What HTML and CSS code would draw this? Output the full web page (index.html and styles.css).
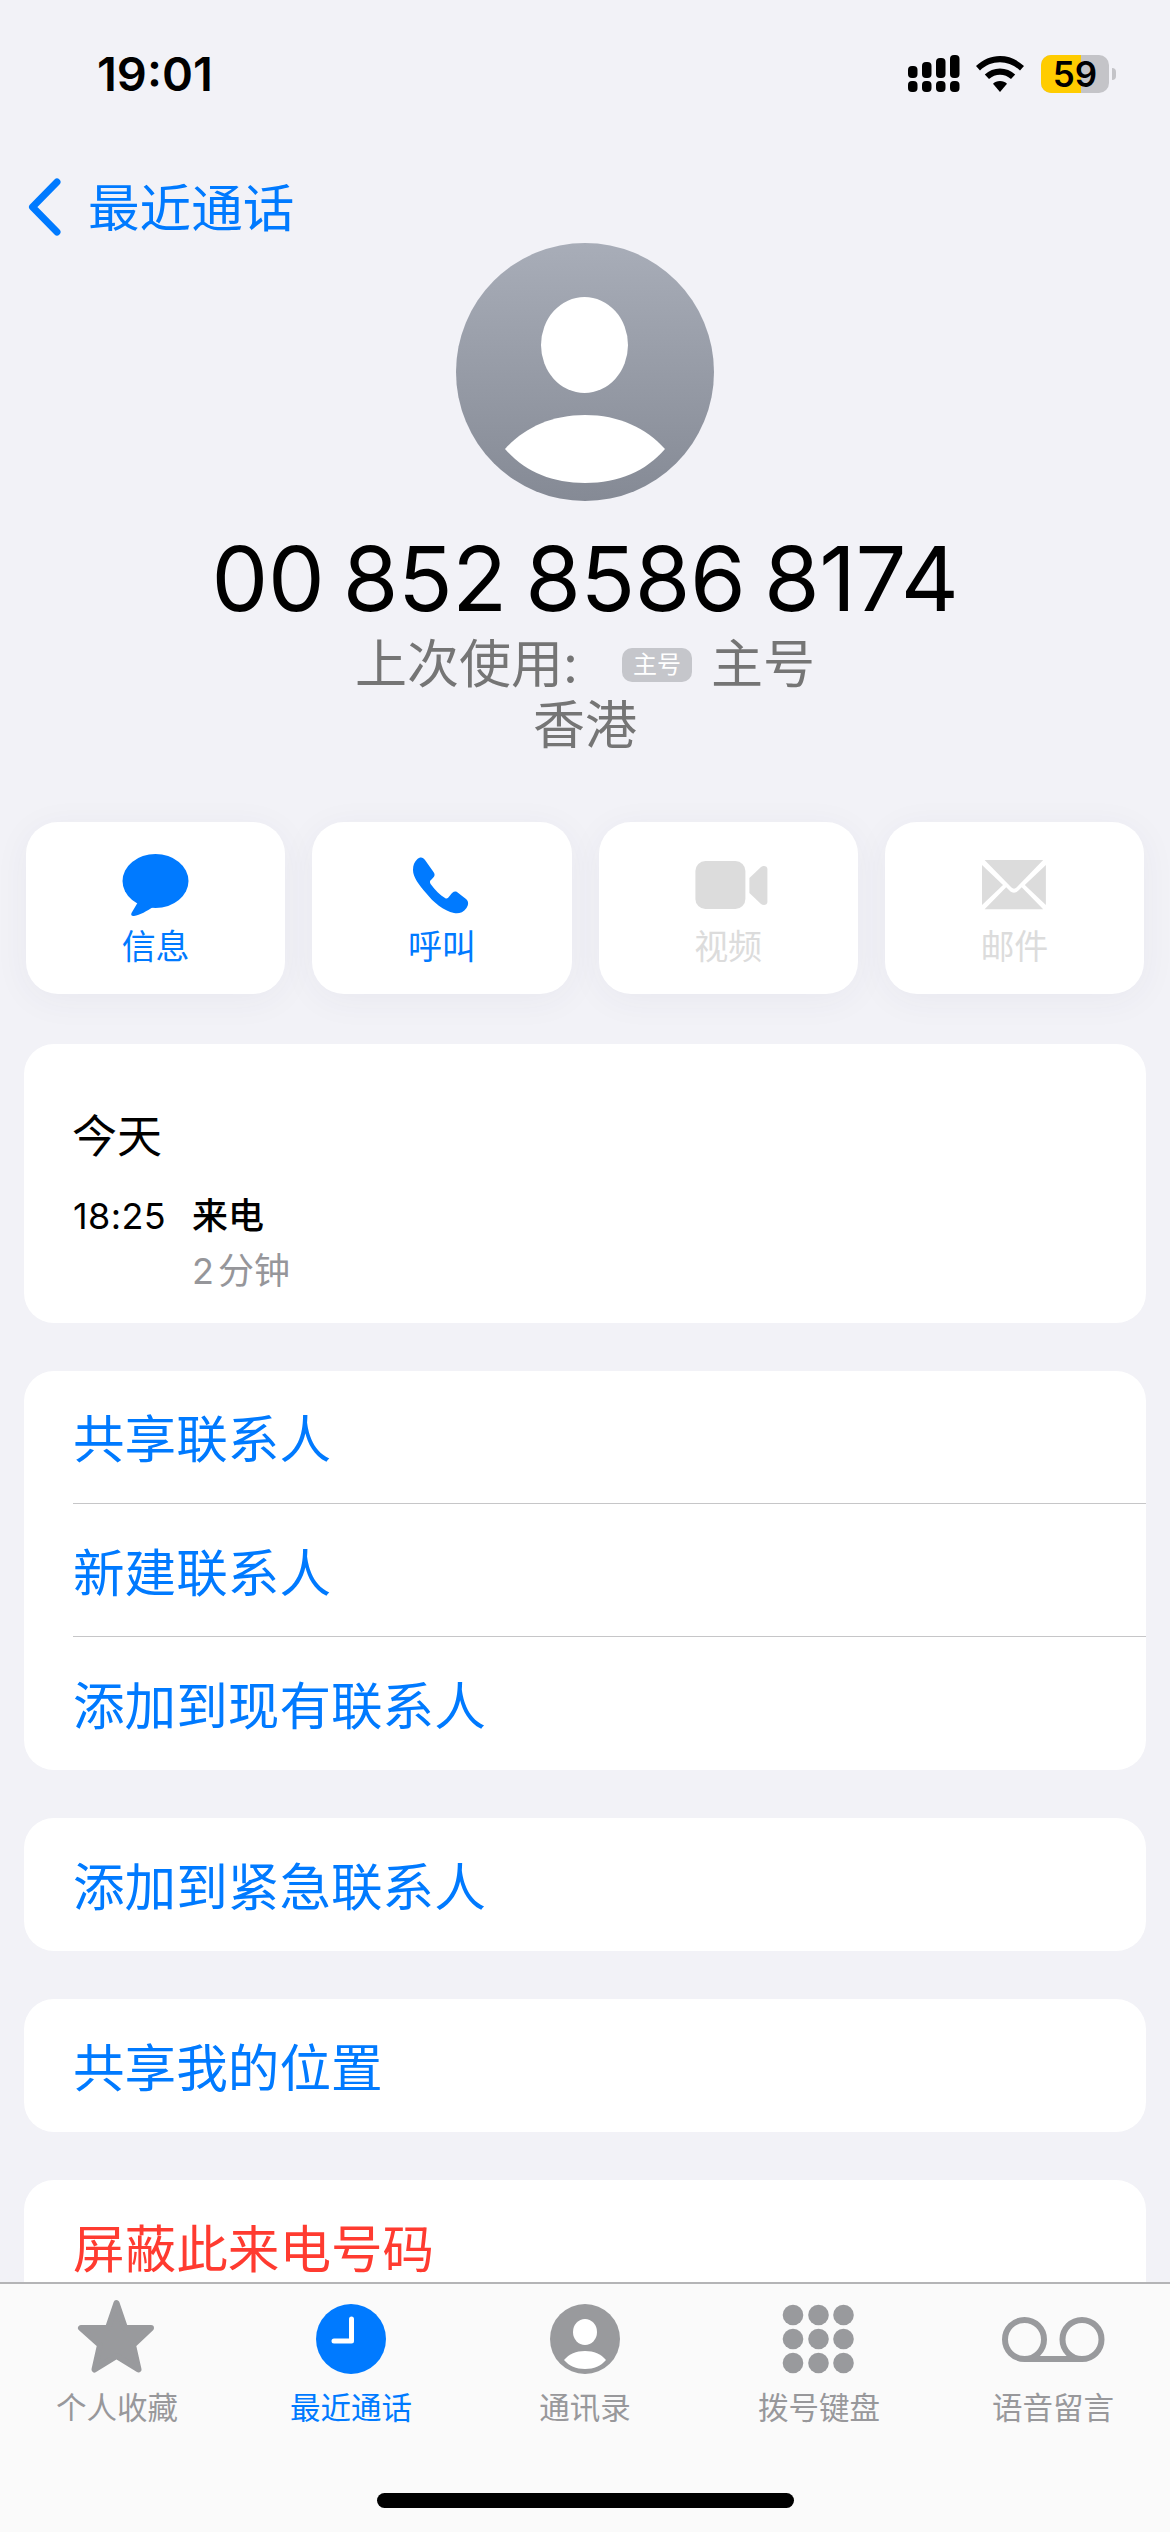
FILE: index.html
```html
<!DOCTYPE html>
<html lang="zh-CN">
<head>
<meta charset="utf-8">
<title>最近通话</title>
<link rel="stylesheet" href="styles.css">
</head>
<body>
<div class="screen">
  <header class="status">
    <span class="clock">19:01</span>
    <div class="indicators">
      <svg class="signal" width="52" height="38" viewBox="0 0 52 38">
        <g fill="#000">
          <rect x="0" y="11" width="9.5" height="12" rx="4"/><rect x="14" y="7" width="9.5" height="16" rx="4"/><rect x="28" y="3" width="9.5" height="20" rx="4"/><rect x="42" y="0" width="9.5" height="23" rx="4"/>
          <rect x="0" y="26" width="9.5" height="11" rx="4"/><rect x="14" y="26" width="9.5" height="11" rx="4"/><rect x="28" y="26" width="9.5" height="11" rx="4"/><rect x="42" y="26" width="9.5" height="11" rx="4"/>
        </g>
      </svg>
      <svg class="wifi" width="48" height="36" viewBox="0 0 48 36">
        <path d="M24 0C33 0 41 3.500 48 10L44 14.500C38.500 9.200 31.500 6.300 24 6.300C16.500 6.300 9.500 9.200 4 14.500L0 10C7 3.500 15 0 24 0Z" fill="#000"/>
        <path d="M24 12.500C29.800 12.500 35 14.700 39.200 18.500L35 23C31.800 20.200 28 18.700 24 18.700C20 18.700 16.200 20.200 13 23L8.800 18.500C13 14.700 18.200 12.500 24 12.500Z" fill="#000"/>
        <path d="M24 25C26.800 25 29.300 26 31 27.700L24 36L17 27.700C18.700 26 21.200 25 24 25Z" fill="#000"/>
      </svg>
      <div class="battery">
        <div class="battery-body"><span class="battery-fill"></span><span class="battery-text">59</span></div>
        <span class="battery-cap"></span>
      </div>
    </div>
  </header>

  <nav class="nav">
    <svg class="chevron" width="40" height="64" viewBox="0 0 40 64"><path d="M33 7L8.500 32L33 57" fill="none" stroke="#007aff" stroke-width="7" stroke-linecap="round" stroke-linejoin="round"/></svg>
    <span class="nav-title">最近通话</span>
  </nav>

  <section class="hero">
    <svg class="avatar" width="258" height="258" viewBox="0 0 258 258">
      <defs><linearGradient id="avatarFill" x1="0" y1="0" x2="0" y2="1"><stop offset="0" stop-color="#a8adb8"/><stop offset="1" stop-color="#858a95"/></linearGradient></defs>
      <circle cx="129" cy="129" r="129" fill="url(#avatarFill)"/>
      <ellipse cx="128.500" cy="102" rx="43.500" ry="48" fill="#fff"/>
      <path d="M49 206C68 185 95 172 129 172C163 172 190 185 209 206C190 228 163 240 129 240C95 240 68 228 49 206Z" fill="#fff"/>
    </svg>
    <h1 class="number">00 852 8586 8174</h1>
    <p class="meta">上次使用:<span class="badge">主号</span>主号</p>
    <p class="meta">香港</p>
  </section>

  <section class="actions">
    <div class="action">
      <svg width="80" height="72" viewBox="0 0 80 72"><ellipse cx="39.500" cy="33" rx="33" ry="27" fill="#007aff"/><path d="M22 54L15.500 65C14.500 67 16 68.500 18 68C24 67 31 63 37 59Z" fill="#007aff"/></svg>
      <span class="action-label">信息</span>
    </div>
    <div class="action">
      <svg width="80" height="72" viewBox="0 0 80 72"><path d="M15 11.500C18 8.500 21 9 23 12L31.500 24C33.500 27 32.500 28.500 30 31C27.500 33 27.500 34 29 36.500C33 42 38 47 43 50C45 51.500 46 50 48 47.500C50 45 52 42.500 55 44L64 51C67 53.500 66.500 57 64.500 60C61 65 56 66 52 65C42 63 31 54 24 45C17 37 11 29 11 22C11 17 12.500 14 15 11.500Z" fill="#007aff"/></svg>
      <span class="action-label">呼叫</span>
    </div>
    <div class="action is-off">
      <svg width="80" height="72" viewBox="0 0 80 72"><rect x="7.400" y="13" width="50" height="48" rx="10" fill="#dcdcdc"/><path d="M61.400 30L73 19C75.500 17 79.400 18 79.400 21V54C79.400 57 75.500 58 73 56L61.400 45Z" fill="#dcdcdc"/></svg>
      <span class="action-label">视频</span>
    </div>
    <div class="action is-off">
      <svg width="80" height="72" viewBox="0 0 80 72"><g fill="#dcdcdc"><path d="M10.600 12H69.200L42.500 39.500C41 41 39 41 37.500 39.500Z"/><path d="M8 17L29 37L8 57Z"/><path d="M71.900 17V57L50.800 37Z"/><path d="M10.600 61.300L32.200 39.300L35 42C38 45.500 42 45.500 45 42L47.700 39.300L69.200 61.300Z"/></g></svg>
      <span class="action-label">邮件</span>
    </div>
  </section>

  <section class="card history">
    <div class="history-day">今天</div>
    <div class="history-grid">
      <span class="history-time">18:25</span>
      <span class="history-kind">来电</span>
      <span class="history-length">2 分钟</span>
    </div>
  </section>

  <section class="card list">
    <div class="row">共享联系人</div>
    <div class="row">新建联系人</div>
    <div class="row">添加到现有联系人</div>
  </section>
  <section class="card single"><div class="row">添加到紧急联系人</div></section>
  <section class="card single"><div class="row">共享我的位置</div></section>
  <section class="card single"><div class="row is-danger">屏蔽此来电号码</div></section>

  <footer class="tabbar">
    <div class="tab">
      <svg width="110" height="80" viewBox="-5 0 110 80"><path d="M49.500 5L58 30H84L66 47L71.500 71.500L49.500 58L27.500 71.500L33 47L14 30H41Z" fill="#999a9d" stroke="#999a9d" stroke-width="6" stroke-linejoin="round"/></svg>
      <span class="tab-label">个人收藏</span>
    </div>
    <div class="tab is-active">
      <svg width="110" height="80" viewBox="-5 0 110 80"><circle cx="50" cy="41" r="35" fill="#007aff"/><path d="M50.500 21V43H33" fill="none" stroke="#fff" stroke-width="5" stroke-linecap="round" stroke-linejoin="round"/></svg>
      <span class="tab-label">最近通话</span>
    </div>
    <div class="tab">
      <svg width="110" height="80" viewBox="-5 0 110 80"><circle cx="50" cy="41" r="35" fill="#999a9d"/><ellipse cx="50" cy="34" rx="12" ry="13" fill="#fff"/><path d="M29 62C34 56 41 53 50 53C59 53 66 56 71 62C66 68 59 71 50 71C41 71 34 68 29 62Z" fill="#fff"/></svg>
      <span class="tab-label">通讯录</span>
    </div>
    <div class="tab">
      <svg width="110" height="80" viewBox="-5 0 110 80"><g fill="#999a9d"><circle cx="24" cy="17" r="10.300"/><circle cx="49.500" cy="17" r="10.300"/><circle cx="74.500" cy="17" r="10.300"/><circle cx="24" cy="41" r="10.300"/><circle cx="49.500" cy="41" r="10.300"/><circle cx="74.500" cy="41" r="10.300"/><circle cx="24" cy="65" r="10.300"/><circle cx="49.500" cy="65" r="10.300"/><circle cx="74.500" cy="65" r="10.300"/></g></svg>
      <span class="tab-label">拨号键盘</span>
    </div>
    <div class="tab">
      <svg width="110" height="80" viewBox="-5 0 110 80"><g fill="none" stroke="#999a9d" stroke-width="6"><circle cx="21.500" cy="41.500" r="19.500"/><circle cx="79" cy="41.500" r="19.500"/><path d="M21.500 61H79"/></g></svg>
      <span class="tab-label">语音留言</span>
    </div>
    <span class="home-indicator"></span>
  </footer>
</div>
</body>
</html>
```
FILE: styles.css
```css
* { box-sizing: border-box; }
html, body { margin: 0; padding: 0; }
body {
  background: #f2f2f7;
  font-family: Inter, "Noto Sans CJK SC", sans-serif;
  color: #000;
}
h1, p { margin: 0; font-weight: 400; }
.screen {
  position: relative;
  width: 1170px;
  height: 2532px;
  overflow: hidden;
  background: #f2f2f7;
}

/* status bar */
.status {
  height: 148px;
  display: flex;
  justify-content: space-between;
  align-items: center;
  padding: 0 54px 0 97px;
}
.clock { font-size: 47px; font-weight: 600; line-height: 56px; }
.indicators { display: flex; align-items: center; }
.signal { margin-right: 16px; }
.wifi { margin-right: 17px; }
.battery { display: flex; align-items: center; gap: 3px; }
.battery-body {
  position: relative;
  width: 68px;
  height: 38px;
  border-radius: 10px;
  background: #c4c4c8;
  display: flex;
  align-items: center;
  justify-content: center;
}
.battery-fill {
  position: absolute;
  left: 0;
  top: 0;
  bottom: 0;
  width: 40px;
  background: #ffcc00;
  border-radius: 10px 0 0 10px;
}
.battery-text { position: relative; font-size: 35px; font-weight: 600; line-height: 38px; }
.battery-cap { width: 4px; height: 12px; background: #c4c4c8; border-radius: 0 6px 6px 0; }

/* nav */
.nav {
  height: 72px;
  margin-top: 23px;
  padding-left: 24px;
  display: flex;
  align-items: center;
}
.chevron { margin-right: 24px; }
.nav-title { font-size: 51.6px; color: #007aff; line-height: 66px; padding-top: 2px; }

/* hero */
.hero { display: flex; flex-direction: column; align-items: center; }
.avatar { display: block; }
.number {
  margin-top: 33px;
  margin-bottom: 10px;
  font-size: 90px;
  line-height: 90px;
  letter-spacing: -0.4px;
  word-spacing: -6.5px;
}
.meta {
  font-size: 52px;
  line-height: 61px;
  color: #757575;
  display: flex;
  align-items: center;
}
.badge {
  width: 70px;
  height: 34px;
  margin: 0 19px 0 44px;
  border-radius: 10px;
  background: #c5c6cb;
  color: #fff;
  font-size: 24px;
  line-height: 34px;
  text-align: center;
}

/* actions */
.actions {
  display: grid;
  grid-template-columns: repeat(4, 1fr);
  gap: 27px;
  padding: 0 26px;
  margin-top: 66px;
}
.action {
  height: 172px;
  padding-top: 26px;
  background: #fff;
  border-radius: 32px;
  box-shadow: 0 6px 36px rgba(60, 60, 90, 0.05);
  display: flex;
  flex-direction: column;
  align-items: center;
  color: #007aff;
}
.action svg { display: block; }
.action-label { margin-top: 5px; font-size: 34px; line-height: 44px; }
.is-off { color: #dcdcdc; }

/* cards */
.card {
  margin: 48px 24px 0;
  background: #fff;
  border-radius: 30px;
  overflow: hidden;
}
.history { height: 279px; margin-top: 50px; padding: 65px 0 0 48px; }
.history-day { font-size: 45px; line-height: 56px; }
.history-grid {
  display: grid;
  grid-template-columns: 119px 1fr;
  row-gap: 10px;
  margin-top: 29px;
  padding-left: 1px;
}
.history-time { font-size: 36px; line-height: 44px; letter-spacing: 0.4px; }
.history-kind { font-size: 36px; line-height: 44px; font-weight: 500; }
.history-length { grid-column: 2; font-size: 36px; line-height: 46px; color: #96969a; word-spacing: -6px; }

.row {
  height: 133px;
  margin-left: 49px;
  padding-top: 5px;
  font-size: 51.6px;
  line-height: 64px;
  color: #007aff;
  display: flex;
  align-items: center;
}
.list { padding-bottom: 1px; }
.list .row:first-child { height: 132px; padding-top: 3px; }
.list .row + .row { border-top: 1px solid #c6c6c8; }
.is-danger { color: #ff3b30; }

/* tab bar */
.tabbar {
  position: absolute;
  left: 0;
  right: 0;
  bottom: 0;
  height: 250px;
  padding-top: 14px;
  background: #fafafa;
  border-top: 2px solid #b4b4b6;
  display: grid;
  grid-template-columns: repeat(5, 1fr);
  align-items: start;
}
.tab { display: flex; flex-direction: column; align-items: center; color: #98989b; }
.tab svg { display: block; }
.tab-label { margin-top: 12px; font-size: 30.5px; line-height: 36px; }
.is-active { color: #007aff; }
.home-indicator {
  position: absolute;
  left: 377px;
  top: 209px;
  width: 417px;
  height: 15px;
  background: #000;
  border-radius: 8px;
}
```
